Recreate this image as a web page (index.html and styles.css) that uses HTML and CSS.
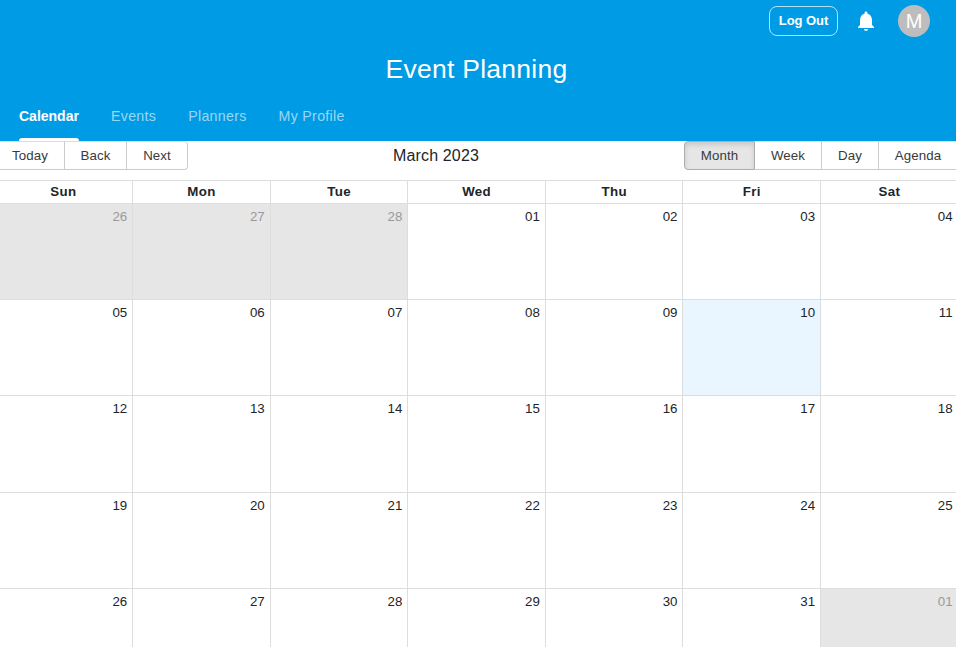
FILE: index.html
```
<!DOCTYPE html>
<html lang="en">
<head>
<meta charset="utf-8">
<title>Event Planning</title>
<link rel="stylesheet" href="styles.css">
</head>
<body>
<header class="header">
  <div class="topbar">
    <button class="logout">Log Out</button>
    <svg class="bell" viewBox="0 0 24 24" width="24" height="24" fill="#fff"><path d="M12 22c1.1 0 2-.9 2-2h-4c0 1.100.890 2 2 2zm6-6v-5c0-3.070-1.640-5.640-4.500-6.320V4c0-.830-.670-1.500-1.500-1.500s-1.500.670-1.500 1.500v.680C7.630 5.360 6 7.920 6 11v5l-2 2v1h16v-1l-2-2z"/></svg>
    <div class="avatar">M</div>
  </div>
  <h1 class="title">Event Planning</h1>
  <nav class="tabs">
    <a class="tab active">Calendar</a>
    <a class="tab">Events</a>
    <a class="tab">Planners</a>
    <a class="tab">My Profile</a>
  </nav>
</header>
<main class="calendar">
  <div class="toolbar">
    <div class="group nav"><button class="today-button">Today</button><button class="back">Back</button><button class="next">Next</button></div>
    <div class="label">March 2023</div>
    <div class="group views"><button class="month pressed">Month</button><button class="week-button">Week</button><button class="day-button">Day</button><button class="agenda">Agenda</button></div>
  </div>
  <div class="view">
    <div class="row head"><b>Sun</b><b>Mon</b><b>Tue</b><b>Wed</b><b>Thu</b><b>Fri</b><b>Sat</b></div>
    <div class="row week"><div class="off">26</div><div class="off">27</div><div class="off">28</div><div>01</div><div>02</div><div>03</div><div>04</div></div>
    <div class="row week"><div>05</div><div>06</div><div>07</div><div>08</div><div>09</div><div class="today">10</div><div>11</div></div>
    <div class="row week"><div>12</div><div>13</div><div>14</div><div>15</div><div>16</div><div>17</div><div>18</div></div>
    <div class="row week"><div>19</div><div>20</div><div>21</div><div>22</div><div>23</div><div>24</div><div>25</div></div>
    <div class="row week"><div>26</div><div>27</div><div>28</div><div>29</div><div>30</div><div>31</div><div class="off">01</div></div>
  </div>
</main>
</body>
</html>
```
FILE: styles.css
```
* { box-sizing: border-box; }
html, body { height: 100%; }
body {
  margin: 0;
  overflow: hidden;
  background: #fff;
  color: #212529;
  font-family: "Liberation Sans", Arial, sans-serif;
  font-size: 13.3px;
}
button { font: inherit; letter-spacing: inherit; margin: 0; padding: 0; }
.header {
  height: 141px;
  background: #009be5;
  color: #fff;
  display: flex;
  flex-direction: column;
}
.topbar {
  height: 42px;
  padding-right: 26px;
  display: flex;
  align-items: center;
  justify-content: flex-end;
}
.logout {
  width: 69px;
  height: 30px;
  padding-bottom: 1px;
  border: 1px solid rgba(255, 255, 255, 0.7);
  border-radius: 8px;
  background: transparent;
  color: #fff;
  font-size: 13px;
  font-weight: 700;
  letter-spacing: -0.05px;
}
.bell { margin: 0 20px 0 16px; }
.avatar {
  width: 32px;
  height: 32px;
  border-radius: 50%;
  background: #bdbdbd;
  font-size: 20px;
  line-height: 32px;
  text-align: center;
}
.title {
  margin: 0;
  padding-right: 3px;
  height: 51px;
  line-height: 54px;
  text-align: center;
  font-size: 26.5px;
  font-weight: 400;
  letter-spacing: 0.25px;
}
.tabs {
  flex: 1;
  display: flex;
  gap: 32px;
  padding-left: 19px;
  font-size: 14.2px;
  letter-spacing: 0.3px;
}
.tab {
  height: 48px;
  line-height: 46px;
  color: rgba(255, 255, 255, 0.6);
}
.tab.active {
  position: relative;
  width: 60px;
  font-size: 14px;
  font-weight: 700;
  letter-spacing: 0;
  color: #fff;
}
.active::after {
  content: "";
  position: absolute;
  left: 0;
  right: 0;
  bottom: 0;
  height: 3px;
  border-radius: 3px 3px 0 0;
  background: #fff;
}
.calendar { height: 506px; overflow: hidden; }
.toolbar {
  height: 29px;
  display: flex;
  justify-content: space-between;
}
.group { display: flex; letter-spacing: 0.1px; }
.group button {
  height: 29px;
  border: 1px solid #ccc;
  border-top-color: #ddd;
  border-left-width: 0;
  background: #fff;
  color: #373a3c;
}
.nav { margin-left: -5px; }
.group .today-button { width: 70px; padding-left: 1px; }
.back { width: 62px; }
.group .next { width: 61px; border-radius: 0 4px 4px 0; }
.label { font-size: 16px; line-height: 30px; letter-spacing: 0.15px; }
.views { margin-right: -2px; }
.group .month { width: 71px; border-left-width: 1px; border-radius: 4px 0 0 4px; }
.week-button { width: 67px; }
.day-button { width: 57px; }
.agenda { width: 79px; }
.group .pressed {
  background: #e6e6e6;
  border-color: #adadad;
  box-shadow: inset 0 3px 5px rgba(0, 0, 0, 0.125);
}
.view { width: 963px; margin: 10px 0 0 -5.4px; border-top: 1px solid #ddd; }
.row { display: grid; grid-template-columns: repeat(7, 1fr); }
.row > * + * { border-left: 1px solid #ddd; }
.head { height: 22px; line-height: 21px; text-align: center; letter-spacing: 0.35px; }
.week { height: 96.2px; }
.week > div { padding: 5px 5px 0; border-top: 1px solid #ddd; line-height: 16px; text-align: right; }
.week > .off { background: #e6e6e6; color: #999; }
.week > .today { background: #eaf6ff; }
```
